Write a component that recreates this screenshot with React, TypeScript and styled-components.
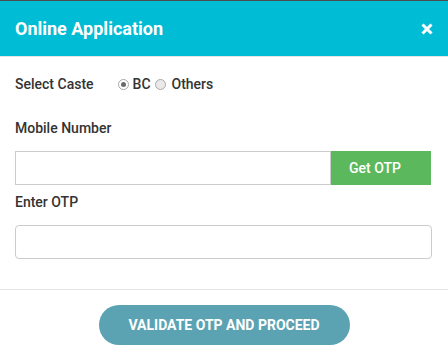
import styled, { createGlobalStyle } from "styled-components";

const Global = createGlobalStyle`
  body {
    margin: 0;
    background: #ffffff;
    font-family: Roboto, "Liberation Sans", sans-serif;
  }
`;

const Modal = styled.div`
  width: 448px;
  height: 358px;
  border-top: 1px solid #4d4d4d;
  box-sizing: border-box;
  background: #fff;
  display: flex;
  flex-direction: column;
`;

const Header = styled.header`
  height: 55px;
  background-color: #00bcd4;
  border-bottom: 1px solid #e5e5e5;
  display: flex;
  align-items: center;
  justify-content: space-between;
  padding: 0 15px;
`;

const Title = styled.h4`
  margin: 0;
  color: #fff;
  font-size: 18px;
  font-weight: 700;
`;

const Close = styled.button`
  border: 0;
  background: none;
  padding: 0;
  color: #fff;
  display: flex;
  cursor: pointer;
`;

const Body = styled.div`
  padding: 17px 15px 0;
  display: flex;
  flex-direction: column;
`;

const Label = styled.label<{ $space?: number }>`
  color: #333;
  font-size: 14px;
  font-weight: 500;
  line-height: 20px;
  margin-bottom: ${(p) => p.$space ?? 0}px;
`;

const CasteRow = styled.div`
  display: flex;
  align-items: center;
  height: 20px;
  margin-bottom: 24px;
`;

const Radio = styled.span<{ $checked?: boolean }>`
  width: 11px;
  height: 11px;
  border-radius: 50%;
  border: 1px solid #a9a9a9;
  background: ${(p) => (p.$checked ? "#fff" : "#e9e9e9")};
  box-sizing: border-box;
  display: inline-flex;
  align-items: center;
  justify-content: center;
  margin: 0 ${(p) => (p.$checked ? 4 : 6)}px 0 ${(p) => (p.$checked ? 24 : 4)}px;
  &::after {
    content: "";
    width: 5px;
    height: 5px;
    border-radius: 50%;
    background: ${(p) => (p.$checked ? "#6b6b6b" : "transparent")};
  }
`;

const Option = styled.span`
  color: #333;
  font-size: 14px;
  font-weight: 500;
`;

const InputGroup = styled.div`
  display: flex;
  height: 34px;
  margin: 0 2px 7px 0;
`;

const Input = styled.input<{ $round?: boolean }>`
  flex: 1;
  height: 34px;
  box-sizing: border-box;
  border: 1px solid #ccc;
  border-radius: ${(p) => (p.$round ? "4px" : "0")};
  padding: 6px 12px;
  font-size: 14px;
  outline: none;
`;

const OtpButton = styled.button`
  width: 100px;
  border: 0;
  background: #5cb85c;
  color: #fff;
  font-family: inherit;
  font-size: 14px;
  font-weight: 500;
  padding: 0 12px 0 0;
`;

const OtpField = styled.div`
  display: flex;
  margin-right: 1px;
`;

const Footer = styled.footer`
  margin-top: 30px;
  border-top: 1px solid #e5e5e5;
  display: flex;
  justify-content: center;
  padding-top: 15px;
`;

const Proceed = styled.button`
  width: 251px;
  height: 40px;
  border: 0;
  border-radius: 20px;
  background: #5ba3b3;
  color: #fff;
  font-family: inherit;
  font-size: 14px;
  font-weight: 700;
`;

export default function App() {
  return (
    <>
      <Global />
      <Modal>
        <Header>
          <Title>Online Application</Title>
          <Close aria-label="close">
            <svg width="12" height="12" viewBox="0 0 12 12">
              <path d="M1.5 1.5 L10.5 10.5 M10.5 1.5 L1.5 10.5" stroke="#fff" strokeWidth="3" />
            </svg>
          </Close>
        </Header>
        <Body>
          <CasteRow>
            <Label>Select Caste</Label>
            <Radio $checked />
            <Option>BC</Option>
            <Radio />
            <Option>Others</Option>
          </CasteRow>
          <Label $space={13}>Mobile Number</Label>
          <InputGroup>
            <Input />
            <OtpButton>Get OTP</OtpButton>
          </InputGroup>
          <Label $space={13}>Enter OTP</Label>
          <OtpField>
            <Input $round />
          </OtpField>
        </Body>
        <Footer>
          <Proceed>VALIDATE OTP AND PROCEED</Proceed>
        </Footer>
      </Modal>
    </>
  );
}
